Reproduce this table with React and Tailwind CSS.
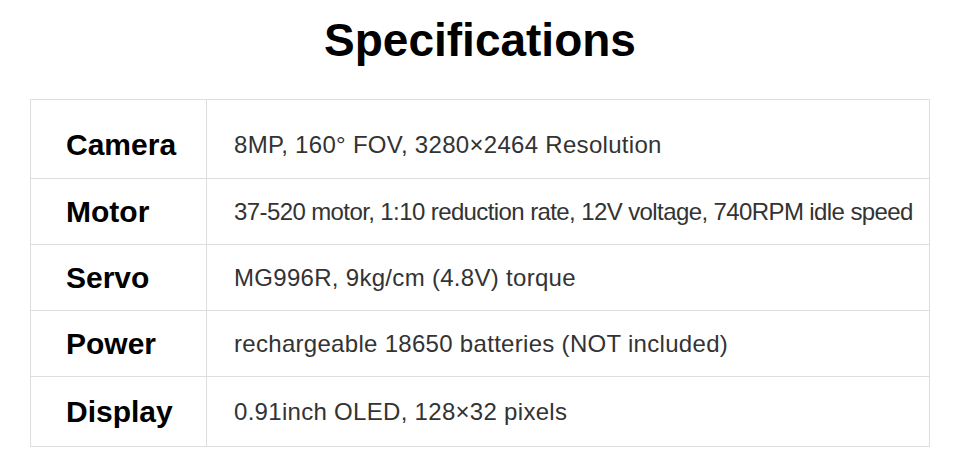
import React from "react";

const rows = [
  { label: "Camera", value: "8MP, 160° FOV, 3280×2464 Resolution", h: "h-[78px] pt-[12px]", tight: false },
  { label: "Motor", value: "37-520 motor, 1:10 reduction rate, 12V voltage, 740RPM idle speed", h: "h-[65px]", tight: true },
  { label: "Servo", value: "MG996R, 9kg/cm (4.8V) torque", h: "h-[65px]", tight: false },
  { label: "Power", value: "rechargeable 18650 batteries (NOT included)", h: "h-[65px]", tight: false },
  { label: "Display", value: "0.91inch OLED, 128×32 pixels", h: "h-[69px]", tight: false },
];

export default function App() {
  return (
    <div className="w-[960px] h-[470px] bg-white font-['Liberation_Sans',Arial,sans-serif]">
      <div className="h-[99px] pt-[14px] text-center">
        <h1 className="text-[46px] leading-[53px] font-bold text-black">Specifications</h1>
      </div>
      <div className="mx-[30px] w-[900px] border border-[#dedede]">
        {rows.map((r, i) => (
          <div
            key={r.label}
            className={`flex ${i > 0 ? "border-t border-[#dedede]" : ""}`}
          >
            <div className={`w-[176px] shrink-0 border-r border-[#dedede] pl-[35px] flex items-center ${r.h}`}>
              <span className="text-[30px] leading-[34px] font-bold text-black">{r.label}</span>
            </div>
            <div className={`flex-1 pl-[27px] flex items-center ${r.h}`}>
              <span
                className={`text-[24px] leading-[28px] text-[#333333] whitespace-nowrap ${r.tight ? "tracking-[-0.6px]" : "tracking-[0.3px]"}`}
              >
                {r.value}
              </span>
            </div>
          </div>
        ))}
      </div>
    </div>
  );
}
